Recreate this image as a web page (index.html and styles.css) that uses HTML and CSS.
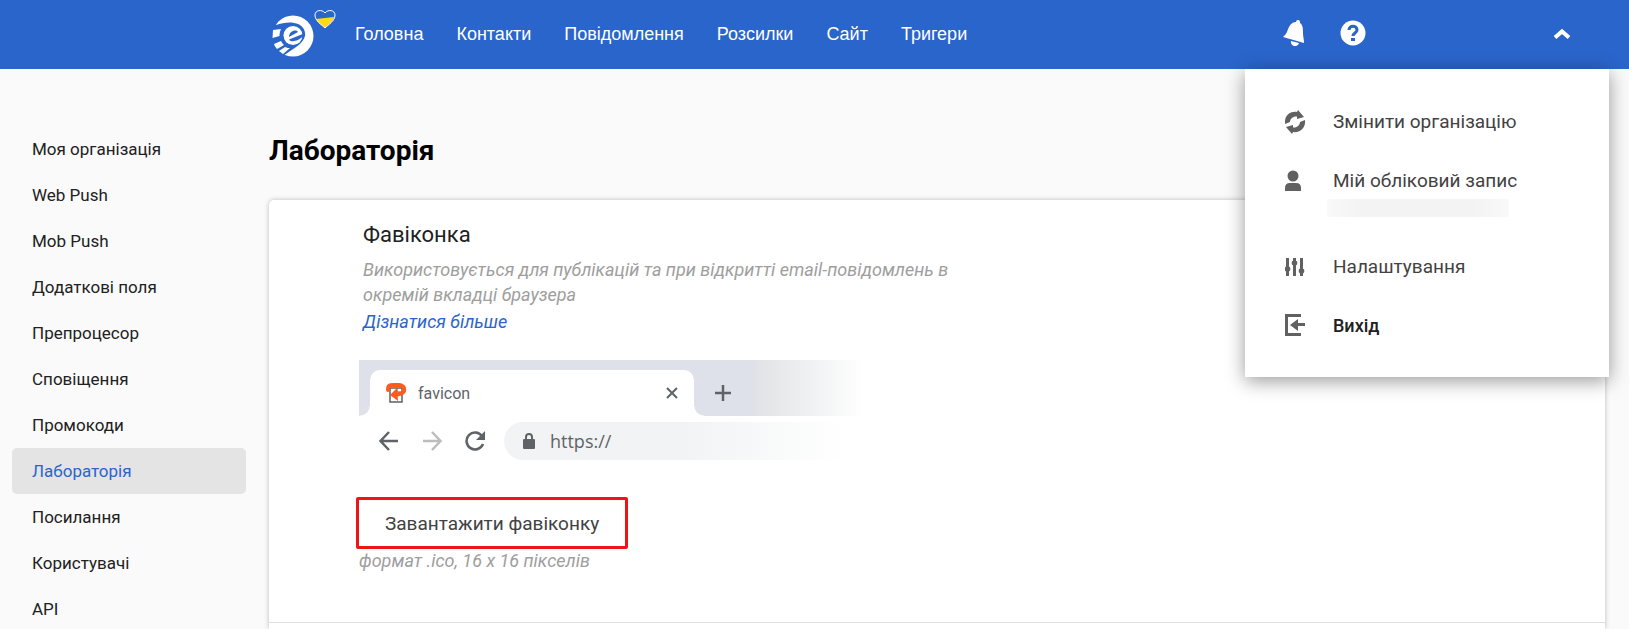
FILE: index.html
```
<!DOCTYPE html>
<html lang="uk">

<head>
    <meta charset="UTF-8" />
    <meta name="viewport" content="width=device-width, initial-scale=1.0" />
    <title>Лабораторія</title>
    <link rel="stylesheet" href="styles.css">
</head>

<body>

    <header>
        <a href="#" class="logo" aria-label="eSputnik">
            <svg class="logo-mark" viewBox="0 0 42 42">
                <circle cx="21" cy="21" r="20.5" fill="#fff" />
                <path d="M-1 0 H6 L4 10 C10 8 17 7 22 8 C30 9 34 15 33 21 C31 29 22 33 14 39 L8 42 H-1 Z" fill="#2a65cb" />
                <path d="M4 11 C8 10 14 9.500 18 10 C13 11 11 13 10 15 L2 14 Z" fill="#2a65cb" />
                <path d="M1 15 L9 14 C8 16 7.500 19 7.500 21 L0.500 23 Z" fill="#fff" />
                <path d="M2 29 L9 26 C10 28 11 29 12 30 L5 34 C3.500 32 2.500 31 2 29 Z" fill="#fff" />
                <path d="M7 36 L13 32 C15 33 17 33 18 33 L11 39 Z" fill="#fff" />
                <circle cx="21" cy="20.500" r="9.500" fill="#fff" />
                <path d="M17 22 C17 16 24 14 26 17 Z" fill="#2a65cb" />
                <path d="M17 24.500 L32 18.500 L31 22 C28 23 26 26 22 26 C19 26.500 18 26 17 24.500 Z" fill="#2a65cb" />
            </svg>
            <svg class="logo-heart" viewBox="0 0 22 20">
                <path d="M2 10 L20 8 C19 13 14 16 11 19 C8 16 4 14 2 10 Z" fill="#ffd91a" />
                <path d="M11 19 C8 16 1 12 1 6 C1 1 8 0 11 4 C14 0 21 1 21 6 C21 12 14 16 11 19 Z" fill="none" stroke="#fff" />
            </svg>
        </a>
        <nav>
            <a href="#">Головна</a>
            <a href="#">Контакти</a>
            <a href="#">Повідомлення</a>
            <a href="#">Розсилки</a>
            <a href="#">Сайт</a>
            <a href="#">Тригери</a>
        </nav>
        <div class="header-right">
            <button class="icon-btn" aria-label="Сповіщення">
                <svg width="22" height="26" viewBox="0 0 22 26" fill="#fff">
                    <path d="M15 0 a2 2 0 0 1 2 2 v1 C20 5 20 9 20 13 C20 17 21 19 21 23 L0 17 C4 14 4 11 6 7 C8 3 11 2 13 2 a2 2 0 0 1 2 -2 Z" />
                    <path d="M8 21 L16 23 A4 4 0 0 1 8 21 Z" />
                </svg>
            </button>
            <button class="icon-btn" aria-label="Допомога">
                <svg width="26" height="26" viewBox="0 0 26 26">
                    <circle cx="13" cy="13" r="12.5" fill="#fff" />
                    <path d="M9 10 C9 5 17 5 17 10 C17 13 13 13 13 16" fill="none" stroke="#2a65cb" stroke-width="3" />
                    <rect x="11" y="18" width="4" height="3" fill="#2a65cb" />
                </svg>
            </button>
            <button class="icon-btn user-toggle" aria-label="Меню користувача" onclick="toggleMenu()">
                <svg width="18" height="12" viewBox="0 0 18 12">
                    <path d="M2 10.500 L9 4.500 L16 10.500" fill="none" stroke="#fff" stroke-width="4" />
                </svg>
            </button>
        </div>

        <div class="user-menu active" id="userMenu">
            <a href="#">
                <svg width="22" height="24" viewBox="0 0 22 24" fill="#616161">
                    <path d="M0 14 C-1 6 5 1 12 2 L13 0 L19 7 L12 9 L12 6.500 C8 6 5 9 5 12 Z" />
                    <path d="M20 10 C21 18 15 23 8 22 L7 24 L1 17 L8 15 L8 17.500 C12 18 15 15 15 12 Z" />
                    <path d="M5 14 L9 10 L10 12 L15 10 L11 14 L10 12.500 Z" fill="#fff" />
                </svg>
                Змінити організацію
            </a>
            <a href="#">
                <svg width="22" height="24" viewBox="0 0 22 24" fill="#616161">
                    <circle cx="8" cy="7" r="5.500" />
                    <path d="M0 22 V19 Q0 14 5 14 H11 Q16 14 16 19 V22 Z" />
                </svg>
                Мій обліковий запис
            </a>
            <div class="user-email"></div>
            <a href="#">
                <svg width="22" height="24" viewBox="0 0 22 24" fill="#616161">
                    <path d="M1 3h3v18H1zM8 3h3v18H8zM15 3h3v18h-3z" />
                    <circle cx="2.500" cy="14" r="2.800" />
                    <circle cx="9.500" cy="8" r="2.800" />
                    <circle cx="16.500" cy="16" r="2.800" />
                </svg>
                Налаштування
            </a>
            <a href="#" class="logout">
                <svg width="22" height="24" viewBox="0 0 22 24" fill="#616161">
                    <path d="M0 0 H16 V3 H3 V19 H16 V22 H0 Z" />
                    <path d="M5 11 L13 5 V9 H20 V12 H13 V17 Z" />
                </svg>
                Вихід
            </a>
        </div>
    </header>

    <div class="page">
        <aside class="sidebar">
            <a href="#">Моя організація</a>
            <a href="#">Web Push</a>
            <a href="#">Mob Push</a>
            <a href="#">Додаткові поля</a>
            <a href="#">Препроцесор</a>
            <a href="#">Сповіщення</a>
            <a href="#">Промокоди</a>
            <a href="#" class="active">Лабораторія</a>
            <a href="#">Посилання</a>
            <a href="#">Користувачі</a>
            <a href="#">API</a>
        </aside>

        <main>
            <h1>Лабораторія</h1>

            <div class="card">
                <section class="favicon-section">
                    <h2>Фавіконка</h2>
                    <p class="description">Використовується для публікацій та при відкритті email-повідомлень в окремій вкладці браузера</p>
                    <a href="#" class="more">Дізнатися більше</a>

                    <div class="browser">
                        <div class="browser-tabs">
                            <div class="browser-tab">
                                <svg width="22" height="22" viewBox="0 0 22 22">
                                    <path d="M5 6 H17 V20 H5 Z" fill="#fff" stroke="#616161" stroke-width="1.500" />
                                    <path d="M12 6 V10 H17" fill="none" stroke="#616161" />
                                    <path d="M3 8 C3 3 5 3 8 3 H14 C21 3 21 12 14 12 L10 13" fill="none" stroke="#ff5a1f" stroke-width="4" stroke-linecap="round" />
                                    <path d="M5 13 L12 6 L13 19 Z" fill="#ff5a1f" />
                                </svg>
                                <span>favicon</span>
                                <svg width="12" height="12" viewBox="0 0 12 12">
                                    <path d="M1 1 L11 11 M11 1 L1 11" stroke="#5f6368" stroke-width="2" />
                                </svg>
                            </div>
                            <svg class="tab-plus" width="16" height="16" viewBox="0 0 16 16">
                                <path d="M8 0 V16 M0 8 H16" stroke="#5f6368" stroke-width="2.500" />
                            </svg>
                        </div>
                        <div class="browser-bar">
                            <svg width="20" height="20" viewBox="0 0 20 20" fill="none" stroke="#5f6368" stroke-width="2.500">
                                <path d="M19 10 H2 M10 1 L1.500 10 L10 19" />
                            </svg>
                            <svg width="20" height="20" viewBox="0 0 20 20" fill="none" stroke="#bdbdbd" stroke-width="2.500">
                                <path d="M1 10 H18 M10 1 L18.500 10 L10 19" />
                            </svg>
                            <svg width="20" height="20" viewBox="0 0 20 20">
                                <path d="M17 5 A8.500 8.500 0 1 0 18 13" fill="none" stroke="#5f6368" stroke-width="2.500" />
                                <path d="M20 0 V9 H11 Z" fill="#5f6368" />
                            </svg>
                            <div class="browser-url">
                                <svg width="12" height="16" viewBox="0 0 12 16">
                                    <rect x="0" y="6" width="12" height="10" rx="1" fill="#5f6368" />
                                    <path d="M3 7 V4 A3 3 0 0 1 9 4 V7" fill="none" stroke="#5f6368" stroke-width="2" />
                                </svg>
                                <span>https://</span>
                            </div>
                        </div>
                    </div>

                    <button class="upload">Завантажити фавіконку</button>
                    <p class="hint">формат .ico, 16 x 16 пікселів</p>
                </section>
            </div>
        </main>
    </div>

    <script>
        function toggleMenu() {
            document.getElementById('userMenu').classList.toggle('active');
        }
    </script>
</body>

</html>
```
FILE: styles.css
```
* {
    box-sizing: border-box;
}

body {
    margin: 0;
    height: 100vh;
    overflow: hidden;
    display: flex;
    flex-direction: column;
    font-family: Roboto, sans-serif;
    background-color: #fafafa;
    color: #212121;
}

a {
    color: inherit;
    text-decoration: none;
}

svg {
    flex-shrink: 0;
}

header {
    flex-shrink: 0;
    position: relative;
    z-index: 1;
    height: 69px;
    padding: 0 58px 0 272px;
    display: flex;
    align-items: center;
    background-color: #2a65cb;
    color: #fff;
}

.logo {
    display: flex;
    width: 64px;
    height: 52px;
}

.logo-mark {
    width: 42px;
    height: 42px;
    margin-top: 6px;
}

.logo-heart {
    width: 22px;
    height: 20px;
}

nav {
    display: flex;
    gap: 33px;
    margin-left: 19px;
    font-family: "Liberation Sans", Arial, sans-serif;
    font-size: 18px;
}

.header-right {
    display: flex;
    align-items: center;
    margin-left: auto;
    padding-bottom: 4px;
}

.icon-btn {
    display: flex;
    padding: 0;
    margin-left: 35px;
    border: none;
    background: none;
    cursor: pointer;
}

.user-toggle {
    margin-left: 187px;
}

.user-menu {
    display: none;
    position: absolute;
    top: 100%;
    right: 20px;
    width: 364px;
    padding: 23px 40px 22px;
    background-color: #fff;
    color: #424242;
    font-size: 19px;
    box-shadow: 0 4px 18px rgba(0, 0, 0, 0.4);
}

.user-menu.active {
    display: block;
}

.user-menu a {
    display: flex;
    align-items: center;
    gap: 26px;
    height: 59px;
}

.user-menu .logout {
    color: #212121;
    font-size: 18px;
    font-weight: 500;
}

.user-email {
    width: 182px;
    height: 18px;
    margin: -11px 0 20px 42px;
    background: linear-gradient(90deg, #f9f9f9, #f3f3f3 20%, #f3f3f3 80%, #f9f9f9);
}

.page {
    flex: 1;
    min-height: 0;
    display: flex;
}

.sidebar {
    width: 269px;
    flex-shrink: 0;
    padding: 57px 23px 0 12px;
    font-size: 17px;
}

.sidebar a {
    display: flex;
    align-items: center;
    height: 46px;
    padding-left: 20px;
    border-radius: 5px;
}

.sidebar a.active {
    background-color: #e4e4e4;
    color: #2a65cb;
}

main {
    flex: 1;
    display: flex;
    flex-direction: column;
    padding: 65px 24px 0 0;
}

h1 {
    margin: 0 0 33px;
    color: #000;
    font-size: 28px;
    font-weight: 700;
    line-height: 33px;
}

.card {
    flex: 1;
    border-radius: 5px 5px 0 0;
    background-color: #fff;
    box-shadow: 0 0 5px rgba(0, 0, 0, 0.25);
}

.favicon-section {
    padding: 21px 90px 49px;
    border-bottom: 1px solid #e0e0e0;
}

h2 {
    margin: 0 0 8px 4px;
    font-size: 22px;
    font-weight: 400;
    line-height: 28px;
}

.description {
    max-width: 610px;
    margin: 0 0 0 4px;
    color: #9e9e9e;
    font-size: 18px;
    font-style: italic;
    line-height: 25px;
}

.more {
    display: inline-block;
    margin: 2px 0 0 4px;
    color: #2a65cb;
    font-size: 18px;
    font-style: italic;
    line-height: 25px;
}

.browser {
    max-width: 504px;
    margin-top: 26px;
    color: #5f6368;
}

.browser-tabs {
    display: flex;
    align-items: center;
    height: 56px;
    background: linear-gradient(90deg, #dee1e9 78%, #e3e4e7 80%, #fff 100%);
}

.browser-tab {
    position: relative;
    display: flex;
    align-items: center;
    align-self: flex-end;
    width: 324px;
    height: 46px;
    margin-left: 11px;
    padding: 0 16px 0 15px;
    border-radius: 10px 10px 0 0;
    background-color: #fff;
    font-size: 16px;
}

/* flared bottom corners of the tab */
.browser-tab::before,
.browser-tab::after {
    content: "";
    position: absolute;
    bottom: 0;
    width: 10px;
    height: 10px;
}

.browser-tab::before {
    right: 100%;
    background: radial-gradient(circle at 0 0, transparent 9px, #fff 10px);
}

.browser-tab::after {
    left: 100%;
    background: radial-gradient(circle at 100% 0, transparent 9px, #fff 10px);
}

.browser-tab span {
    flex: 1;
    margin-left: 11px;
}

.tab-plus {
    margin: 10px 0 0 21px;
}

.browser-bar {
    display: flex;
    align-items: center;
    gap: 23px;
    padding: 6px 0 0 20px;
}

.browser-url {
    flex: 1;
    display: flex;
    align-items: center;
    gap: 15px;
    height: 38px;
    margin-left: -4px;
    padding-left: 19px;
    border-radius: 19px 0 0 19px;
    background: linear-gradient(90deg, #f1f3f4 50%, #fff 95%);
    font-family: "Open Sans", sans-serif;
    font-size: 18px;
}

.upload {
    display: block;
    height: 52px;
    margin: 37px 0 0 -3px;
    padding: 0 26px;
    border: 3px solid #ed1515;
    border-radius: 2px;
    background: none;
    color: #424242;
    font-family: inherit;
    font-size: 19px;
    cursor: pointer;
}

.hint {
    margin: 0;
    color: #9e9e9e;
    font-size: 18px;
    font-style: italic;
    line-height: 24px;
}
```
